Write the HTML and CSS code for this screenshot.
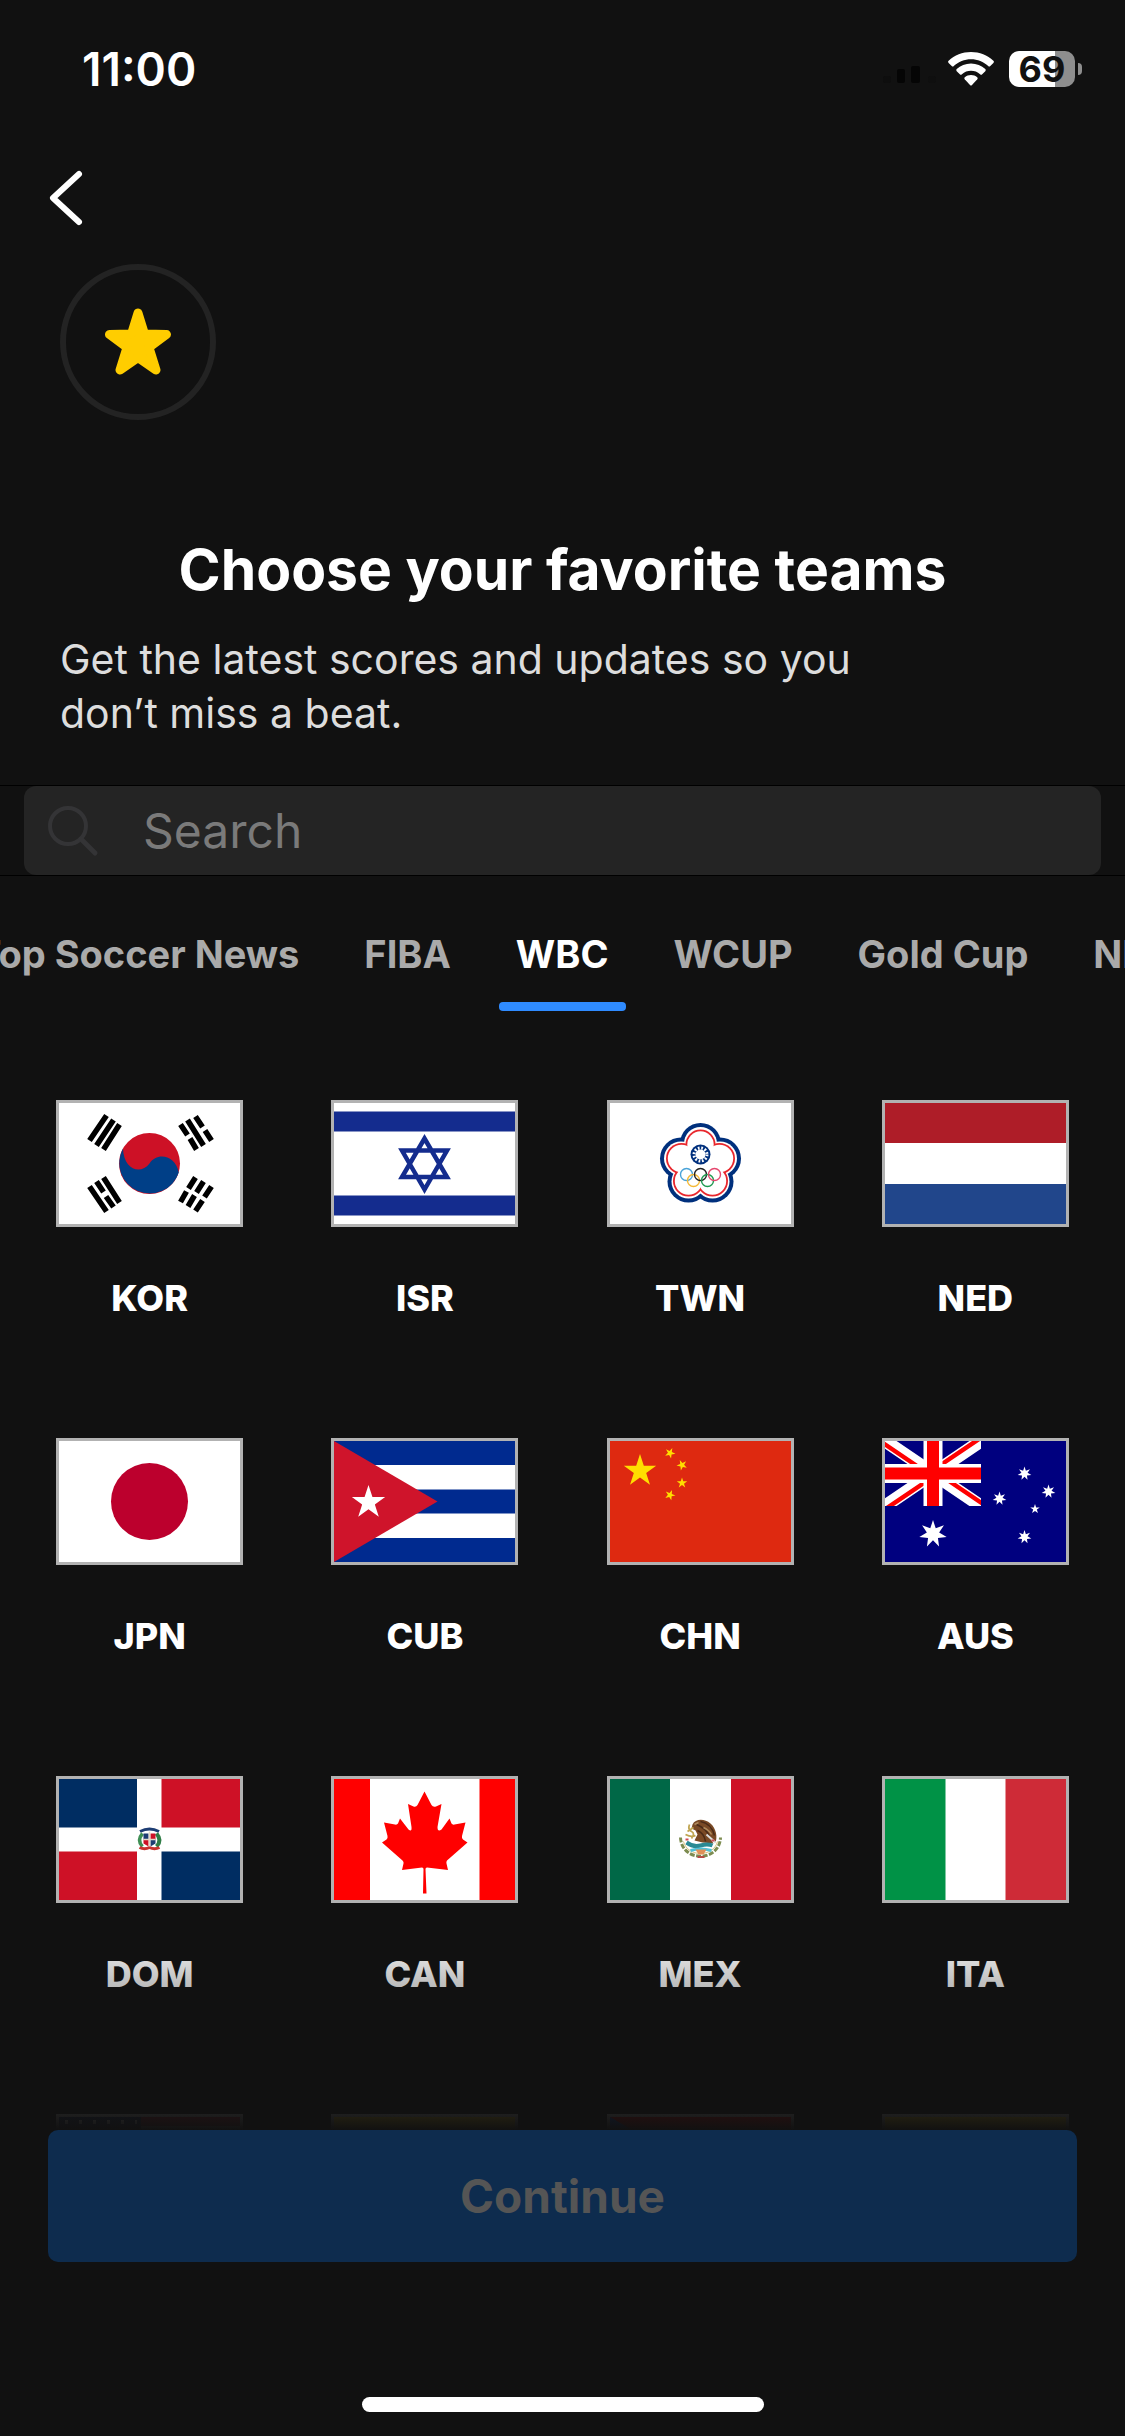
FILE: index.html
```html
<!DOCTYPE html>
<html lang="en">

<head>
	<meta charset="UTF-8">
	<meta name="viewport" content="width=device-width, initial-scale=1">
	<title>Choose your favorite teams</title>
	<link rel="stylesheet" href="styles.css">
</head>

<body>
	<!-- Shared star shapes -->
	<svg class="defs" aria-hidden="true">
		<symbol id="star5" viewBox="-10 -10 20 20" overflow="visible">
			<path d="M0-10 2.25-3.09 9.51-3.09 3.63 1.18 5.88 8.09 0 3.82-5.88 8.09-3.63 1.18-9.51-3.09-2.25-3.09z" />
		</symbol>
		<symbol id="star7" viewBox="-10 -10 20 20" overflow="visible">
			<path d="M0-10 1.95-4.05 7.82-6.23 4.39-1 9.75 2.23 3.52 2.8 4.34 9.01 0 4.5-4.34 9.01-3.52 2.8-9.75 2.23-4.39-1-7.82-6.23-1.95-4.05z" />
		</symbol>
	</svg>

	<header class="status-bar">
		<time class="clock">11:00</time>
		<div class="status-icons">
			<svg class="signal" width="56" height="22" viewBox="0 0 56 22" aria-hidden="true">
				<rect x="0" y="11" width="8" height="7" rx="2" fill="#0e0e0e" />
				<rect x="14" y="4" width="8" height="14" rx="2" fill="#050505" />
				<rect x="28" y="1" width="9" height="17" rx="2" fill="#050505" />
				<rect x="45" y="11" width="8" height="7" rx="2" fill="#0f0f0f" />
			</svg>
			<svg class="wifi" width="46" height="34" viewBox="0 0 46 34" aria-label="Wi-Fi">
				<g fill="#fff">
					<path d="M23 0c8.600 0 16.500 3.300 22.400 8.800a1.500 1.500 0 0 1 0 2.100l-3.100 3.100a1.500 1.500 0 0 1-2.100 0C35.600 9.800 29.500 7.300 23 7.300S10.400 9.800 5.800 14a1.500 1.500 0 0 1-2.100 0L.6 10.900a1.500 1.500 0 0 1 0-2.100C6.500 3.300 14.400 0 23 0z" />
					<path d="M23 11.600c5.500 0 10.500 2.100 14.300 5.500a1.500 1.500 0 0 1 0 2.100l-3.100 3.100a1.500 1.500 0 0 1-2.100 0 13.600 13.600 0 0 0-18.200 0 1.500 1.500 0 0 1-2.100 0l-3.100-3.100a1.500 1.500 0 0 1 0-2.100c3.800-3.400 8.800-5.500 14.300-5.500z" />
					<path d="M23 23.100c2.400 0 4.500.8 6.200 2.200.6.500.6 1.400.1 2L24 32.900a1.400 1.400 0 0 1-2 0l-5.300-5.600c-.5-.6-.5-1.500.1-2 1.700-1.400 3.800-2.200 6.200-2.200z" />
				</g>
			</svg>
			<span class="battery">69</span>
		</div>
	</header>

	<nav class="nav">
		<a href="#" class="back" aria-label="Back">
			<svg width="36" height="58" viewBox="0 0 36 58" aria-hidden="true">
				<path d="M31 5 5 29l26 24" fill="none" stroke="#fff" stroke-width="6" stroke-linecap="round" stroke-linejoin="round" />
			</svg>
		</a>
	</nav>

	<section class="intro">
		<div class="badge">
			<svg width="68" height="68" viewBox="0 0 68 68" aria-hidden="true">
				<path d="M34 5 40.500 26 62.500 26.500 45 39.500 52 62 34 49.500 16 62 23 39.500 5.500 26.500 27.500 26z" fill="#ffcd00" stroke="#ffcd00" stroke-width="9" stroke-linejoin="round" />
			</svg>
		</div>
		<h1>Choose your favorite teams</h1>
		<p>Get the latest scores and updates so you don’t miss a beat.</p>
	</section>

	<form class="search">
		<label class="search-box">
			<svg width="52" height="52" viewBox="0 0 52 52" aria-hidden="true">
				<g fill="none" stroke="#343436" stroke-width="4">
					<circle cx="20" cy="21" r="18" />
					<path d="M33 34 47 48" stroke-width="5" stroke-linecap="round" />
				</g>
			</svg>
			<input type="search" placeholder="Search" aria-label="Search teams">
		</label>
	</form>

	<nav class="tabs">
		<a href="#">Top Soccer News</a>
		<a href="#">FIBA</a>
		<a href="#" class="active">WBC</a>
		<a href="#">WCUP</a>
		<a href="#">Gold Cup</a>
		<a href="#">NFL</a>
	</nav>

	<main class="teams">
		<div class="grid">
			<button class="team">
				<svg class="flag" viewBox="0 0 181 121" aria-hidden="true">
					<rect width="181" height="121" fill="#fff" />
					<g transform="translate(90.500 60.500)">
						<circle r="30.500" fill="#cd1126" />
						<path d="M-26.500-15A30.500 30.500 0 1 0 29.300 9C26-8 8-12 0 0-9 12-26 6-26.500-15z" fill="#003f87" />
						<g stroke="#000" stroke-width="5.500">
							<path d="M-60-23-43-48M-53-18-36-43.500M-46-14-30-39" />
							<path d="M-60 23-43 48M-53 18-46 28.500M-43.500 33-36 43.500M-46 14-30 39" />
							<path d="M46-47 53-36.500M55.500-33 62-23M38-43.500 54-18M31-39 38-28.500M40.500-25 47-14" />
							<path d="M46 14 39 25M37 28 31 38.500M54 18 47 29M45 32 38.500 43M62 23 55 33.500M53 37 46 47.500" />
						</g>
					</g>
				</svg>
				<span>KOR</span>
			</button>
			<button class="team">
				<svg class="flag" viewBox="0 0 181 121" aria-hidden="true">
					<rect width="181" height="121" fill="#fff" />
					<path d="M0 8.500h181v20H0zM0 92.500h181v20H0z" fill="#142c8e" />
					<path d="M90.500 35.500 113 74H68zM90.500 86.500 68 47.500h45z" fill="none" stroke="#142c8e" stroke-width="4.500" />
				</svg>
				<span>ISR</span>
			</button>
			<button class="team">
				<svg class="flag" viewBox="0 0 181 121" aria-hidden="true">
					<rect width="181" height="121" fill="#fff" />
					<g transform="translate(90.500 61)">
						<g fill="#00307d">
							<circle cy="-20.500" r="20.500" />
							<circle cx="19.500" cy="-5.500" r="21" />
							<circle cx="12" cy="17.500" r="21" />
							<circle cx="-12" cy="17.500" r="21" />
							<circle cx="-19.500" cy="-5.500" r="21" />
						</g>
						<g fill="#fff">
							<circle cy="-20.500" r="16.500" />
							<circle cx="19.500" cy="-5.500" r="17" />
							<circle cx="12" cy="17.500" r="17" />
							<circle cx="-12" cy="17.500" r="17" />
							<circle cx="-19.500" cy="-5.500" r="17" />
						</g>
						<g fill="#e8262c">
							<circle cy="-19.500" r="15" />
							<circle cx="19" cy="-5.500" r="15.500" />
							<circle cx="12" cy="17" r="15.500" />
							<circle cx="-12" cy="17" r="15.500" />
							<circle cx="-19" cy="-5.500" r="15.500" />
						</g>
						<g fill="#fff">
							<circle cy="-19.500" r="13.200" />
							<circle cx="19" cy="-5.500" r="13.700" />
							<circle cx="12" cy="17" r="13.700" />
							<circle cx="-12" cy="17" r="13.700" />
							<circle cx="-19" cy="-5.500" r="13.700" />
							<circle r="16" />
						</g>
						<circle cy="-9.500" r="10" fill="#00307d" />
						<circle cy="-9.500" r="6.500" fill="none" stroke="#fff" stroke-width="3" stroke-dasharray="1.700" />
						<circle cy="-9.500" r="5" fill="#fff" />
						<g fill="none" stroke-width="1.400">
							<circle cx="-14" cy="10.500" r="6" stroke="#4aa3d8" />
							<circle cx="-7" cy="16.500" r="6" stroke="#f5b935" />
							<circle cy="10.500" r="6" stroke="#222" />
							<circle cx="7" cy="16.500" r="6" stroke="#1d9a50" />
							<circle cx="14" cy="10.500" r="6" stroke="#e5476e" />
						</g>
					</g>
				</svg>
				<span>TWN</span>
			</button>
			<button class="team">
				<svg class="flag" viewBox="0 0 181 121" aria-hidden="true">
					<rect width="181" height="121" fill="#fff" />
					<path d="M0 0h181v40H0z" fill="#ae1d28" />
					<path d="M0 81h181v40H0z" fill="#21468b" />
				</svg>
				<span>NED</span>
			</button>

			<button class="team">
				<svg class="flag" viewBox="0 0 181 121" aria-hidden="true">
					<rect width="181" height="121" fill="#fff" />
					<circle cx="90.500" cy="60.500" r="38.500" fill="#bc002d" />
				</svg>
				<span>JPN</span>
			</button>
			<button class="team">
				<svg class="flag" viewBox="0 0 181 121" aria-hidden="true">
					<rect width="181" height="121" fill="#fff" />
					<path d="M0 0h181v24H0zM0 48.500h181v24H0zM0 97h181v24H0z" fill="#002a8f" />
					<path d="M0 0 103.500 60.500 0 121z" fill="#cf142b" />
					<use href="#star5" x="17" y="44" width="35" height="35" fill="#fff" />
				</svg>
				<span>CUB</span>
			</button>
			<button class="team">
				<svg class="flag" viewBox="0 0 181 121" aria-hidden="true">
					<rect width="181" height="121" fill="#de2910" />
					<g fill="#ffde00">
						<use href="#star5" x="13" y="13" width="34" height="34" />
						<use href="#star5" x="-5.500" y="-5.500" width="11" height="11" transform="translate(60 12) rotate(25)" />
						<use href="#star5" x="-5.500" y="-5.500" width="11" height="11" transform="translate(72 24) rotate(48)" />
						<use href="#star5" x="-5.500" y="-5.500" width="11" height="11" transform="translate(72 42)" />
						<use href="#star5" x="-5.500" y="-5.500" width="11" height="11" transform="translate(60 54) rotate(22)" />
					</g>
				</svg>
				<span>CHN</span>
			</button>
			<button class="team">
				<svg class="flag" viewBox="0 0 181 121" aria-hidden="true">
					<rect width="181" height="121" fill="#00007f" />
					<svg width="96" height="65" viewBox="0 0 96 65">
						<path d="M0 0 96 65M96 0 0 65" stroke="#fff" stroke-width="13" />
						<path d="M-2 2 46 34.500M98 63 50 30.500M46 30.500 94-2M50 34.500 2 67" stroke="#f00" stroke-width="4.500" />
						<path d="M48 0v65M0 32.500h96" stroke="#fff" stroke-width="19" />
						<path d="M48 0v65M0 32.500h96" stroke="#f00" stroke-width="12" />
					</svg>
					<g fill="#fff">
						<use href="#star7" x="34" y="79" width="28" height="28" />
						<use href="#star7" x="132.500" y="25.500" width="14" height="14" />
						<use href="#star7" x="156.500" y="43.500" width="14" height="14" />
						<use href="#star7" x="107.500" y="50.500" width="14" height="14" />
						<use href="#star7" x="132.500" y="89" width="14" height="14" />
						<use href="#star5" x="145" y="63" width="10" height="10" />
					</g>
				</svg>
				<span>AUS</span>
			</button>

			<button class="team">
				<svg class="flag" viewBox="0 0 181 121" aria-hidden="true">
					<rect width="181" height="121" fill="#fff" />
					<path d="M0 0h78v48.500H0zM102.500 72.500H181V121h-78.500z" fill="#002d62" />
					<path d="M102.500 0H181v48.500h-78.500zM0 72.500h78V121H0z" fill="#ce1126" />
					<g transform="translate(90.500 60.500)" fill="none">
						<path d="M-9.500-8Q0-13 9.500-8" stroke="#1d3d73" stroke-width="3" />
						<path d="M-7-6Q-13 1-7 7" stroke="#3f8f55" stroke-width="3.500" />
						<path d="M7-6Q13 1 7 7" stroke="#2f7d46" stroke-width="4" />
						<path d="M-10 8Q-5 10.500 0 8 5 10.500 10 8" stroke="#c8322f" stroke-width="3" />
						<path d="M-6-6H-1V0H-6zM1 0H6V4L1 7z" fill="#1d3d73" />
						<path d="M1-6H6V0H1zM-6 0H-1V7L-6 4z" fill="#ce1126" />
						<path d="M0-8V7M-6 0H6" stroke="#e4d9c8" stroke-width="1.500" />
					</g>
				</svg>
				<span>DOM</span>
			</button>
			<button class="team">
				<svg class="flag" viewBox="0 0 181 121" aria-hidden="true">
					<rect width="181" height="121" fill="#fff" />
					<path d="M0 0h36v121H0zM145.500 0H181v121h-35.500z" fill="#f00" />
					<path d="M90.500 12.500 97.500 26Q99 28.500 102 27.500L107.500 25 103.500 48Q103.500 53.500 107.500 50.500L115.500 39.500 117.500 44.500Q118.500 46 120.500 45.500L131.500 43.500 128 57Q127.500 59.500 129 60.500L133.500 63.500 113 81.500Q112 83 112.500 84.500L114 91 93 88.500Q91.500 88.500 91.500 90L92.500 114.500H89L89.500 90Q89.500 88.500 88 88.500L68 91 69.500 84.500Q70 83 68.500 81.500L48 63.500 52.500 60.500Q54 59.500 53.500 57L50 43.500 61 45.500Q63 46 64 44.500L66 39.500 74.500 50.500Q78 53.500 77.500 48L74 25 79.500 27.500Q82 28.500 83.500 26z" fill="#f00" />
				</svg>
				<span>CAN</span>
			</button>
			<button class="team">
				<svg class="flag" viewBox="0 0 181 121" aria-hidden="true">
					<rect width="181" height="121" fill="#fff" />
					<path d="M0 0h60v121H0z" fill="#006847" />
					<path d="M121 0h60v121h-60z" fill="#ce1126" />
					<g transform="translate(90.500 60.500)" fill="none">
						<path d="M-20-2C-19 23 19 23 20-2" stroke="#7d8c50" stroke-width="3" stroke-dasharray="5 1.500" />
						<path d="M-17 2C-13 18 13 18 17 2" stroke="#d8c27a" stroke-width="1" />
						<path d="M-8-15C-5-21 4-21 10-16 16-11 17-2 15 3L8-4 13 4 2 3-6 1-3-5-5-9-9-11z" fill="#7a4a26" />
						<path d="M0-18Q11-16 14-4M-4-15Q6-11 9-3M-3-9Q4-6 5 2" stroke="#4a2b18" stroke-width="1.500" />
						<path d="M-6-15-2-17M3-12Q9-9 11-5" stroke="#b08a5c" stroke-width="1.500" />
						<path d="M6-5 15 3" stroke="#ddd" stroke-width="2" />
						<path d="M-11-15Q-13-10-9-8T-9-1M-15-5Q-9-2-5-4M-13-8-7-12" stroke="#c0a552" stroke-width="1.800" />
						<path d="M-14 3Q-7 8 0 6T12 6" stroke="#2a8a94" stroke-width="4" />
						<path d="M-10 11Q0 8 11 11" stroke="#4fc0d8" stroke-width="3" />
						<path d="M-5 10H6L3 15H-2z" fill="#e09058" />
						<path d="M-3 17.500H4" stroke="#b64a45" stroke-width="2" />
						<path d="M-15 0h3M11 1h3" stroke="#d04a55" stroke-width="2" />
					</g>
				</svg>
				<span>MEX</span>
			</button>
			<button class="team">
				<svg class="flag" viewBox="0 0 181 121" aria-hidden="true">
					<rect width="181" height="121" fill="#fff" />
					<path d="M0 0h60.500v121H0z" fill="#009246" />
					<path d="M120.500 0H181v121h-60.500z" fill="#ce2b37" />
				</svg>
				<span>ITA</span>
			</button>

			<!-- Next row, mostly hidden behind the footer -->
			<button class="team" aria-label="USA">
				<svg class="flag" viewBox="0 0 181 121" aria-hidden="true">
					<rect width="181" height="121" fill="#fff" />
					<path d="M0 4.500h181M0 23h181M0 41.500h181M0 60h181M0 78.500h181M0 97h181M0 116h181" stroke="#b22234" stroke-width="9.300" />
					<rect width="82" height="65" fill="#1c2c5e" />
					<path d="M6 5h72" stroke="#fff" stroke-width="4" stroke-dasharray="3 11" />
				</svg>
			</button>
			<button class="team" aria-label="COL">
				<svg class="flag" viewBox="0 0 181 121" aria-hidden="true">
					<rect width="181" height="121" fill="#fcd116" />
					<path d="M0 60h181v30H0z" fill="#003893" />
					<path d="M0 90h181v31H0z" fill="#ce1126" />
				</svg>
			</button>
			<button class="team" aria-label="PUR">
				<svg class="flag" viewBox="0 0 181 121" aria-hidden="true">
					<rect width="181" height="121" fill="#fff" />
					<path d="M0 0h181v24H0zM0 48.500h181v24H0zM0 97h181v24H0z" fill="#ed0000" />
					<path d="M0 0 103.500 60.500 0 121z" fill="#0050f0" />
					<use href="#star5" x="17" y="44" width="35" height="35" fill="#fff" />
				</svg>
			</button>
			<button class="team" aria-label="VEN">
				<svg class="flag" viewBox="0 0 181 121" aria-hidden="true">
					<rect width="181" height="121" fill="#fcd116" />
					<path d="M0 40h181v41H0z" fill="#00247d" />
					<path d="M0 81h181v40H0z" fill="#cf142b" />
				</svg>
			</button>
		</div>
	</main>

	<footer class="footer">
		<button class="continue" disabled>Continue</button>
		<div class="home-indicator"></div>
	</footer>

	<script>
		// Keep the selected tab in the middle of the strip
		const tabs = document.querySelector('.tabs');
		const active = tabs.querySelector('.active');
		tabs.scrollLeft = active.offsetLeft + active.offsetWidth / 2 - tabs.clientWidth / 2;
	</script>
</body>

</html>
```
FILE: styles.css
```css
* {
    box-sizing: border-box;
}
body {
    font-family: Inter, "Liberation Sans", sans-serif;
    background-color: #111;
    color: white;
    display: flex;
    flex-direction: column;
    height: 100vh;
    margin: 0;
    overflow: hidden;
}
a {
    color: inherit;
    text-decoration: none;
}
button, input {
    font: inherit;
    color: inherit;
    border: none;
    background: none;
    padding: 0;
}
.defs {
    position: absolute;
    width: 0;
    height: 0;
}

/* Status bar */
.status-bar {
    display: flex;
    justify-content: space-between;
    align-items: center;
    height: 138px;
    padding: 0 42px 0 82px;
}
.clock {
    font-size: 46px;
    font-weight: 600;
}
.status-icons {
    display: flex;
    align-items: center;
    gap: 15px;
}
.signal {
    align-self: flex-end;
    margin-right: -6px;
}
.battery {
    position: relative;
    width: 66px;
    height: 36px;
    margin-right: 8px;
    border-radius: 10px;
    background: linear-gradient(to right, #fff 70%, #8e8e8e 70%);
    color: #111;
    font-size: 36px;
    font-weight: 700;
    line-height: 36px;
    text-align: center;
}
.battery::after {
    content: "";
    position: absolute;
    right: -7px;
    top: 12px;
    width: 4px;
    height: 12px;
    border-radius: 0 6px 6px 0;
    background-color: #8e8e8e;
}

/* Header */
.nav {
    display: flex;
    align-items: center;
    height: 120px;
    padding: 0 48px;
}
.back {
    display: flex;
}
.intro {
    padding: 6px 60px 0;
}
.badge {
    display: flex;
    justify-content: center;
    align-items: center;
    width: 156px;
    height: 156px;
    border: 6px solid #232323;
    border-radius: 50%;
}
h1 {
    margin: 114px 0 0;
    font-size: 57px;
    font-weight: 700;
    line-height: 72px;
    text-align: center;
}
.intro p {
    margin: 26px 0 0;
    max-width: 860px;
    color: #ddd;
    font-size: 41px;
    line-height: 54px;
}

/* Search */
.search {
    margin-top: 45px;
    padding: 0 24px;
    border-top: 1px solid #000;
    border-bottom: 1px solid #000;
}
.search-box {
    display: flex;
    align-items: center;
    gap: 43px;
    height: 89px;
    padding: 0 24px;
    border-radius: 12px;
    background-color: #242424;
}
.search-box input {
    flex: 1;
    min-width: 0;
    font-size: 48px;
    outline: none;
}
.search-box input::placeholder {
    color: #7a7a7a;
    opacity: 1;
}

/* League tabs */
.tabs {
    position: relative;
    display: flex;
    gap: 31px;
    margin-top: 48px;
    padding: 0 18px;
    overflow-x: auto;
    scrollbar-width: none;
}
.tabs a {
    flex: none;
    padding: 6px 17px 24px;
    border-bottom: 9px solid transparent;
    color: #aaa;
    font-size: 38px;
    font-weight: 700;
    line-height: 48px;
}
.tabs .active {
    position: relative;
    color: white;
}
.tabs .active::after {
    content: "";
    position: absolute;
    left: 0;
    right: 0;
    bottom: -9px;
    height: 9px;
    border-radius: 4px;
    background-color: #2f8bff;
}

/* Teams */
.teams {
    position: relative;
    flex: 1;
    min-height: 0;
    overflow: hidden;
}
.teams::after {
    content: "";
    position: absolute;
    left: 0;
    right: 0;
    bottom: 0;
    height: 200px;
    background: linear-gradient(to bottom, rgba(17,17,17,0), #111);
    pointer-events: none;
}
.grid {
    display: grid;
    grid-template-columns: repeat(4, 1fr);
    row-gap: 118px;
    padding: 89px 12px 0;
}
.team {
    display: flex;
    flex-direction: column;
    align-items: center;
    gap: 50px;
    font-size: 36px;
    font-weight: 800;
    line-height: 43px;
    cursor: pointer;
}
.flag {
    width: 187px;
    height: 127px;
    border: 3px solid #b2b2b2;
}

/* Footer */
.footer {
    display: flex;
    flex-direction: column;
    align-items: center;
    padding: 0 48px 24px;
}
.continue {
    width: 100%;
    height: 132px;
    border-radius: 10px;
    background-color: #0e2c4e;
    color: #555;
    font-size: 46px;
    font-weight: 700;
}
.home-indicator {
    width: 402px;
    max-width: 100%;
    height: 15px;
    margin-top: 135px;
    border-radius: 8px;
    background-color: white;
}
```
